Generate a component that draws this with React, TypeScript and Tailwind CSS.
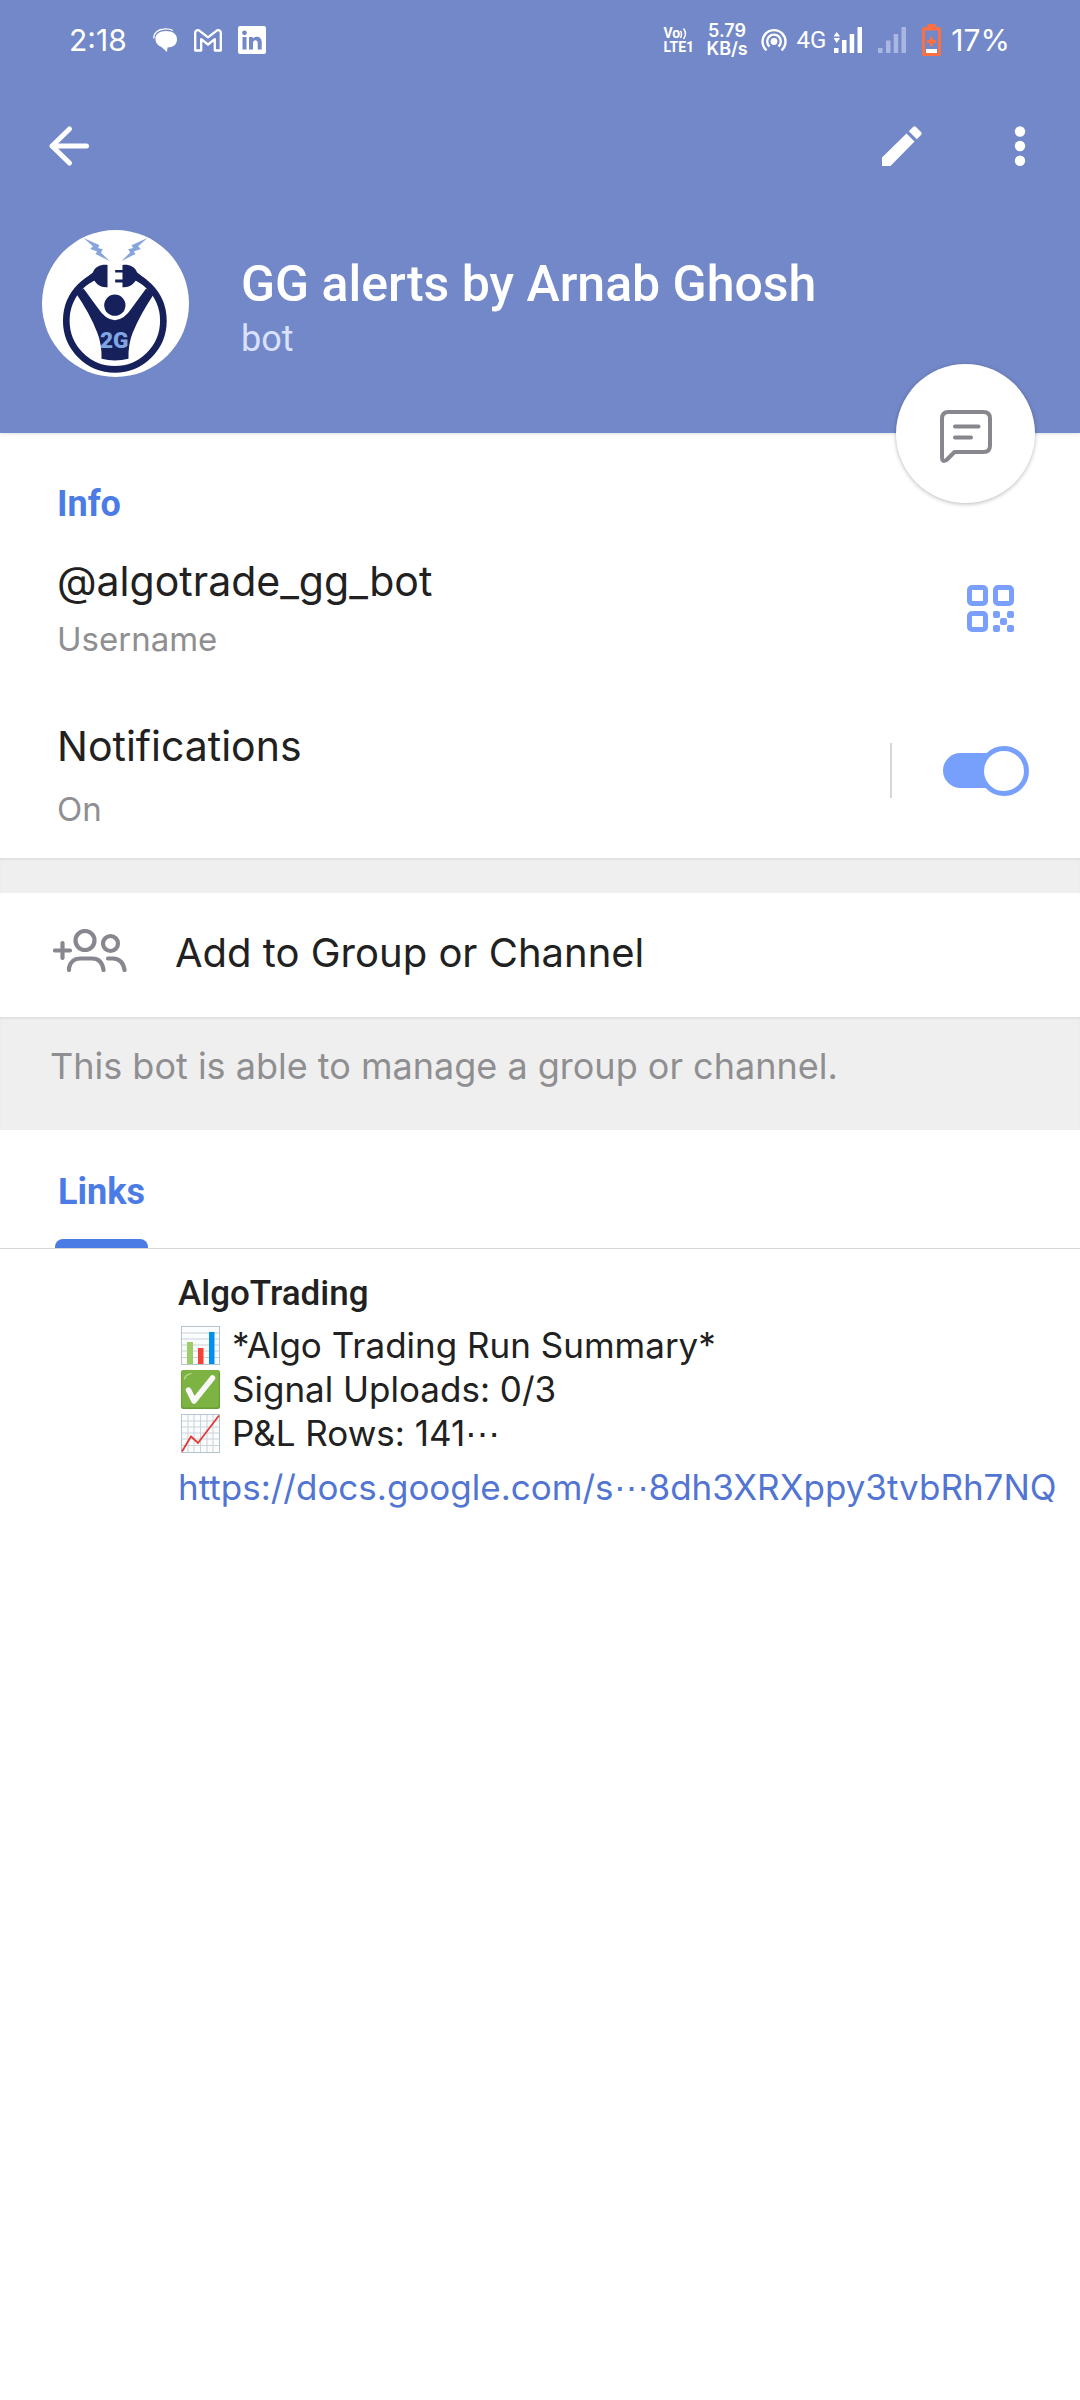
import { useState } from "react";

function StatusBar() {
  return (
    <div className="flex h-20 items-center justify-between pl-[69px] pr-[70px] text-[30px] leading-10">
      <div className="flex items-center">
        <span>2:18</span>
        <svg className="ml-[26px] h-6 w-6" viewBox="0 0 24 24" aria-hidden="true">
          <path d="M2.500 12C1.500 6 7 3 13 3C20 3 24 6 24 11.500C24 16.500 20 19.500 14.500 19.500L14 24L8.500 19C4.500 17.500 3 15 2.500 12Z" fill="#fff" />
          <path d="M.8 10.500C.5 4 6 1.200 11 1C15 .7 18 1.300 20 2.500" fill="none" stroke="#fff" strokeWidth="1.300" />
        </svg>
        <svg className="ml-[17px] h-[23px] w-7" viewBox="0 0 28 23" aria-hidden="true">
          <path d="M1.200 3.500C1.200 1.200 4 .5 5.600 1.800L14 8.400L22.400 1.800C24 .5 26.800 1.200 26.800 3.500V21.500H20.800V10.200L14 15.500L7.200 10.200V21.500H1.200Z" fill="none" stroke="#fff" strokeWidth="2.300" strokeLinejoin="round" />
        </svg>
        <svg className="ml-4 h-7 w-7" viewBox="0 0 28 28" aria-hidden="true">
          <rect width="28" height="28" rx="2" fill="#fff" />
          <g fill="#7388c8">
            <rect x="4.500" y="11" width="4" height="12.500" />
            <circle cx="6.500" cy="6.800" r="2.400" />
            <path d="M11 11H14.800V12.700C16.800 9.700 23.700 9.800 23.700 16V23.500H19.700V17C19.700 13.200 15 13.500 15 17V23.500H11Z" />
          </g>
        </svg>
      </div>
      <div className="flex items-center">
        <div className="flex w-[34px] flex-col font-['Roboto',sans-serif] text-[14px] font-bold leading-[14px]">
          <span className="flex items-center">
            Vo
            <svg className="h-[13px] w-[9px]" viewBox="0 0 9 13" aria-hidden="true">
              <path d="M.5 4Q2.500 7 .5 11M3.500 1.500Q7.500 6.500 3.500 12" fill="none" stroke="#fff" strokeWidth="1.500" />
            </svg>
          </span>
          <span>LTE1</span>
        </div>
        <div className="ml-[9px] w-[41px] text-center text-[18px] font-semibold leading-[18px]">
          5.79
          <br />
          KB/s
        </div>
        <svg className="ml-[13px] h-6 w-[26px]" viewBox="0 0 26 24" aria-hidden="true">
          <circle cx="13" cy="13.500" r="3.400" fill="#fff" />
          <path d="M8.500 18.500A6.800 6.800 0 1 1 17.500 18.500M5.500 22.300A11.500 11.500 0 1 1 20.500 22.300" fill="none" stroke="#fff" strokeWidth="2.400" />
        </svg>
        <span className="ml-[10px] font-['Roboto',sans-serif] text-[24px]">4G</span>
        <svg className="ml-2 h-[26px] w-7" viewBox="0 0 28 26" fill="#fff" aria-hidden="true">
          <path d="M0 21H4.500V26H0ZM8 13H12.500V26H8ZM15.700 7H20.200V26H15.700ZM23.500 0H28V26H23.500ZM-.5 9.500L2.800 5L6 9.500ZM-.5 11L2.800 16L6 11Z" />
        </svg>
        <svg className="ml-4 h-[26px] w-7" viewBox="0 0 28 26" fill="#aab7e2" aria-hidden="true">
          <path d="M0 21H4.500V26H0ZM8 13.500H12.500V26H8ZM15.700 7H20.200V26H15.700ZM23.500 0H28V26H23.500Z" />
        </svg>
        <svg className="ml-4 h-8 w-[19px]" viewBox="0 0 19 32" aria-hidden="true">
          <path d="M5.500 0H13.500V3H17Q19 3 19 5V30Q19 32 17 32H2Q0 32 0 30V5Q0 3 2 3H5.500ZM3 6.500V29H16V6.500Z" fill="#fb7043" fillRule="evenodd" />
          <path d="M9.500 13V22M5 17.500H14" stroke="#fb7043" strokeWidth="3" />
          <path d="M4 25H15V29H4Z" fill="#fff" />
        </svg>
        <span className="ml-[10px]">17%</span>
      </div>
    </div>
  );
}

function Avatar() {
  return (
    <svg className="h-[147px] w-[147px] shrink-0 rounded-full" viewBox="35 30 442 442" role="img" aria-label="Profile photo">
      <rect x="35" y="30" width="442" height="442" fill="#fff" />
      <circle cx="254" cy="303" r="146" fill="none" stroke="#16205a" strokeWidth="20" />
      <rect x="226" y="130" width="56" height="76" fill="#fff" />
      <g fill="#16205a">
        <path d="M232 135V202C212 204 200 194 192 182L168 196L160 180L188 158C194 140 212 133 232 135Z" />
        <path d="M277 135V150H255V158H277V179H255V188H277V202C297 204 309 194 317 182L342 196L350 180L321 158C315 140 297 133 277 135Z" />
        <circle cx="254" cy="256" r="32" />
        <path d="M160 206L204 266Q226 300 254 301Q282 300 304 266L348 206L372 222Q330 285 308 338Q294 372 295 417Q254 428 214 417Q215 372 201 338Q178 280 138 222Z" />
      </g>
      <g fill="#86a5dc">
        <path d="M160 54L208 76L203 84L218 88L212 98L239 124L196 102L201 95L180 87L188 79Z" />
        <path d="M352 54L304 76L309 84L294 88L300 98L273 124L316 102L311 95L332 87L324 79Z" />
      </g>
      <text x="252" y="384" textAnchor="middle" fontFamily="Roboto, sans-serif" fontWeight="900" fontSize="68" fill="#7fa6e3">2G</text>
    </svg>
  );
}

function ChartBars() {
  return (
    <svg className="h-[39px] w-[39px]" viewBox="0 0 39 39" role="img" aria-label="Bar chart">
      <rect x=".5" y=".5" width="38" height="38" fill="#fafcfd" stroke="#b7c3ca" />
      <path d="M1 7H38M1 13H38M1 19H38M1 25H38M1 31.500H38" stroke="#c9d3d8" />
      <rect x="6" y="16" width="6" height="22" fill="#9ccc65" />
      <rect x="17" y="22" width="5.500" height="16" fill="#f44336" />
      <rect x="28" y="6" width="5.500" height="32" fill="#0290ea" />
    </svg>
  );
}

function CheckMark() {
  return (
    <svg className="h-[39px] w-[39px]" viewBox="0 0 39 39" role="img" aria-label="Check mark">
      <rect width="39" height="39" rx="2.500" fill="#689f38" />
      <rect x=".8" width="37" height="37.500" rx="2.500" fill="#7cb342" />
      <path d="M3 8Q4 3 12 3Q9 5 6 6Q5 9 3 10Z" fill="#aed581" />
      <path d="M7.500 20L13 31L31.500 8" fill="none" stroke="#fafafa" strokeWidth="5.500" strokeLinecap="round" strokeLinejoin="round" />
    </svg>
  );
}

function ChartLine() {
  return (
    <svg className="h-[39px] w-[39px]" viewBox="0 0 39 39" role="img" aria-label="Rising chart">
      <rect x=".5" y=".5" width="38" height="38" fill="#fafcfd" stroke="#b7c3ca" />
      <path d="M1 7H38M1 13H38M1 19H38M1 25H38M1 31.500H38M7 1V38M13 1V38M19.500 1V38M26 1V38M32 1V38" stroke="#c9d3d8" />
      <path d="M1 37.500L10 22.500L17 29L38 1.500" fill="none" stroke="#e53935" strokeWidth="1.800" />
    </svg>
  );
}

const summary = [
  { icon: <ChartBars />, text: "*Algo Trading Run Summary*" },
  { icon: <CheckMark />, text: "Signal Uploads: 0/3" },
  { icon: <ChartLine />, text: "P&L Rows: 141⋯" },
];

export default function App() {
  const [on, setOn] = useState(true);
  return (
    <div className="min-h-screen bg-white font-['Inter',sans-serif] text-[#212121]">
      <header className="relative bg-[#7388c8] pb-14 text-white shadow-[0_1px_3px_rgba(60,80,140,0.18)]">
        <StatusBar />
        <nav className="flex h-[130px] items-center justify-between pl-[47px] pr-[52px] pt-[2px]">
          <button aria-label="Back">
            <svg className="h-11 w-11" viewBox="0 0 44 44" fill="none" stroke="#fff" strokeWidth="5" strokeLinecap="round" strokeLinejoin="round" aria-hidden="true">
              <path d="M22.500 5L5 22L22.500 39M5 22H39.500" />
            </svg>
          </button>
          <div className="flex items-center gap-[90px]">
            <button aria-label="Edit">
              <svg className="h-10 w-10" viewBox="0 0 40 40" fill="#fff" aria-hidden="true">
                <path d="M0 31.500L24.500 7.500L32.500 15.500L8.500 40H0ZM26.800 5.200L31 1Q32.500 -.3 34 1L39 6Q40.300 7.500 39 9L34.800 13.200Z" />
              </svg>
            </button>
            <button aria-label="More options">
              <svg className="h-10 w-4" viewBox="0 0 16 40" fill="#fff" aria-hidden="true">
                <circle cx="8" cy="5.500" r="5.200" />
                <circle cx="8" cy="20" r="5.200" />
                <circle cx="8" cy="34.800" r="5.200" />
              </svg>
            </button>
          </div>
        </nav>
        <div className="flex items-start gap-[52px] pl-[42px] pt-5 font-['Roboto',sans-serif]">
          <Avatar />
          <div className="pt-6">
            <h1 className="text-[50px] font-medium leading-[60px]">GG alerts by Arnab Ghosh</h1>
            <p className="text-[36px] leading-[50px] text-[#d9e1ff]">bot</p>
          </div>
        </div>
        <button
          aria-label="Send message"
          className="absolute -bottom-[70px] right-[45px] flex h-[139px] w-[139px] items-center justify-center rounded-full bg-white shadow-[0_1px_4px_rgba(0,0,0,0.28)]"
        >
          <svg className="mt-1 h-[54px] w-[54px]" viewBox="0 0 54 54" fill="none" stroke="#87878d" strokeWidth="4" strokeLinecap="round" strokeLinejoin="round" aria-hidden="true">
            <path d="M9.500 3H44.500Q51 3 51 9.500V36.500Q51 43 44.500 43H15.500L7.500 51Q3 53.500 3 49V9.500Q3 3 9.500 3Z" />
            <path d="M16 17.500H39.500M16 28.500H32" />
          </svg>
        </button>
      </header>

      <section className="pb-[25px] pl-[57px] pt-[49px]">
        <h2 className="font-['Roboto',sans-serif] text-[36px] font-bold leading-[44px] text-[#4b7be5]">Info</h2>
        <div className="flex items-center justify-between pr-[66px] pt-[27px]">
          <div>
            <p className="text-[41px] leading-[56px]">@algotrade_gg_bot</p>
            <p className="pt-[6px] text-[33px] leading-[48px] text-[#8f8f92]">Username</p>
          </div>
          <button aria-label="Show QR code">
            <svg className="h-[47px] w-[47px]" viewBox="0 0 47 47" fill="none" stroke="#7a9ffc" strokeWidth="5" aria-hidden="true">
              <rect x="2.500" y="2.500" width="16" height="16" rx="2.500" />
              <rect x="28.500" y="2.500" width="16" height="16" rx="2.500" />
              <rect x="2.500" y="28.500" width="16" height="16" rx="2.500" />
              <g fill="#7a9ffc" stroke="none">
                <rect x="26" y="26" width="7" height="7" rx="2" />
                <rect x="40" y="26" width="7" height="7" rx="2" />
                <rect x="33" y="33" width="7" height="7" rx="2" />
                <rect x="26" y="40" width="7" height="7" rx="2" />
                <rect x="40" y="40" width="7" height="7" rx="2" />
              </g>
            </svg>
          </button>
        </div>
        <div className="flex items-center justify-between pr-[52px] pt-[55px]">
          <label htmlFor="notifications">
            <span className="block text-[41px] leading-[56px]">Notifications</span>
            <span className="block pt-[11px] text-[33px] leading-[48px] text-[#8f8f92]">On</span>
          </label>
          <div className="flex items-center gap-[51px] pb-[10px]">
            <div className="h-[55px] w-[2px] bg-[#d6d6d6]" />
            <span className="relative flex h-[50px] w-[85px] items-center">
              <input
                id="notifications"
                type="checkbox"
                role="switch"
                checked={on}
                onChange={() => setOn(!on)}
                className="peer h-[35px] w-[78px] appearance-none rounded-full bg-[#b0b4bd] checked:bg-[#779ffc]"
              />
              <span className="pointer-events-none absolute left-0 h-[50px] w-[50px] rounded-full border-[5px] border-[#b0b4bd] bg-white peer-checked:left-[36px] peer-checked:border-[#779ffc]" />
            </span>
          </div>
        </div>
      </section>

      <div className="h-[35px] bg-[#efefef] shadow-[inset_0_2px_2px_rgba(0,0,0,0.06)]" />

      <button className="flex w-full items-center gap-12 pb-[38px] pl-[53px] pt-[34px] text-left">
        <svg className="mb-[6px] h-[43px] w-[74px]" viewBox="0 0 74 43" fill="none" stroke="#87878f" strokeWidth="4.200" strokeLinecap="round" aria-hidden="true">
          <path d="M2 21.500H17M9.500 14V29" />
          <circle cx="32" cy="11.500" r="9.500" />
          <circle cx="57.500" cy="14.500" r="7.500" />
          <path d="M16 41V39Q18 29.500 27 29.500H39Q49 29.500 50.500 41M55 29.500H60Q70 30 71.500 41" />
        </svg>
        <span className="text-[40px] leading-[52px]">Add to Group or Channel</span>
      </button>

      <p className="bg-[#efefef] pb-10 pl-[50px] pt-[25px] text-[36px] leading-[48px] text-[#8f8f92] shadow-[inset_0_2px_2px_rgba(0,0,0,0.06)]">
        This bot is able to manage a group or channel.
      </p>

      <div role="tablist" className="flex border-b border-[#d6d6d6] pl-[55px]">
        <button role="tab" aria-selected="true" className="flex flex-col gap-[25px] pt-10 font-['Roboto',sans-serif] text-[36px] font-bold leading-[44px] text-[#4b7be5]">
          <span className="px-[3px]">Links</span>
          <span className="h-[9px] w-full rounded-t-lg bg-[#4b7be5]" />
        </button>
      </div>

      <article className="pl-[178px] pt-[21px] text-[35px]">
        <h3 className="font-['Roboto',sans-serif] font-medium leading-[48px]">AlgoTrading</h3>
        <div className="pb-2 pl-[3px] pt-[5px]">
          {summary.map((line) => (
            <p key={line.text} className="flex h-11 items-center gap-3 leading-[44px]">
              {line.icon}
              <span>{line.text}</span>
            </p>
          ))}
        </div>
        <a href="https://docs.google.com/" className="block whitespace-nowrap leading-[48px] text-[#5274d2]">
          https://docs.google.com/s⋯8dh3XRXppy3tvbRh7NQ
        </a>
      </article>
    </div>
  );
}
